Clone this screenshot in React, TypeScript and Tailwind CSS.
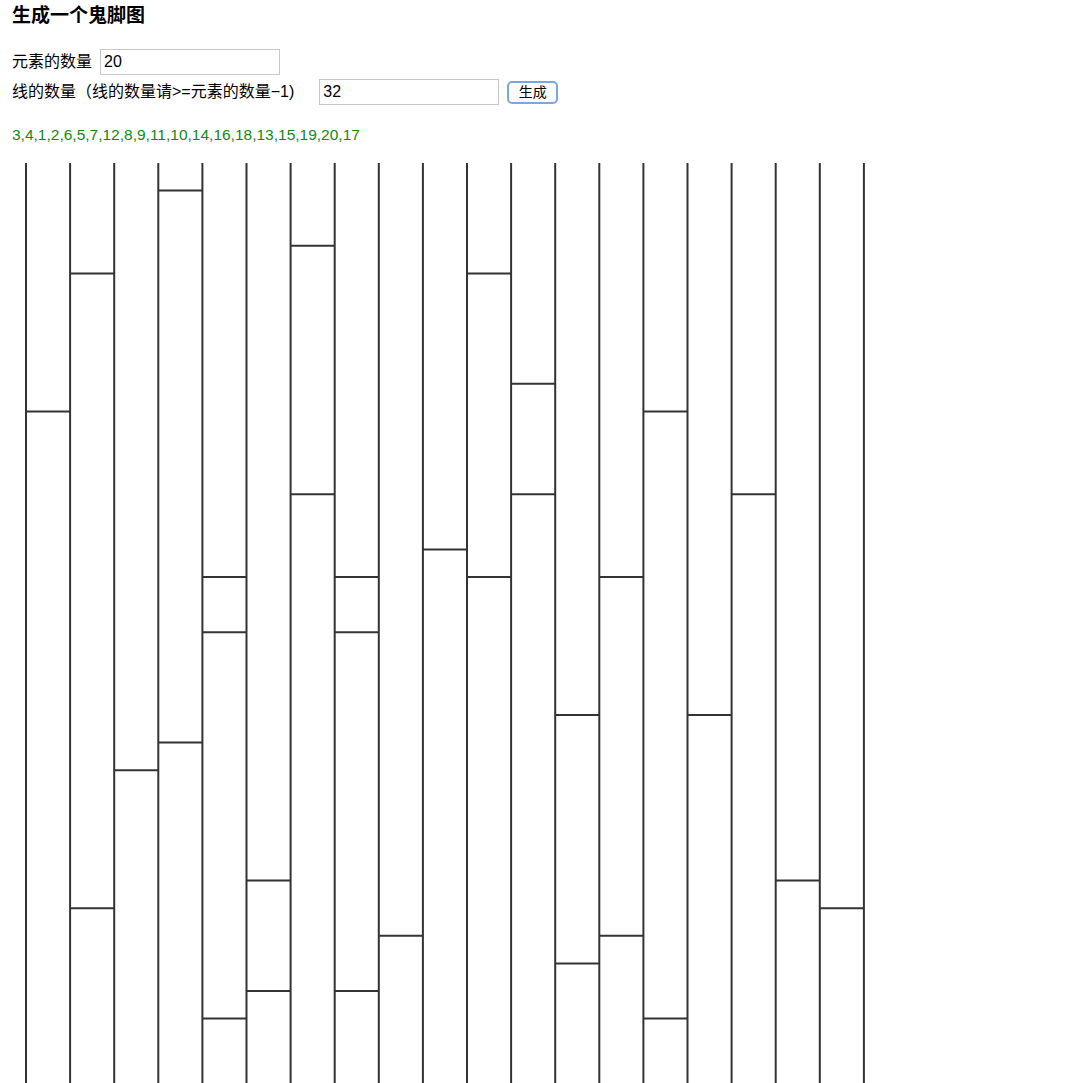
const COLS = 20;
const X0 = 26;
const DX = 44.1;
const STEP = 27.6;

// [column index, step index] of every rung
const rungs: [number, number][] = [
  [0, 9],
  [1, 4], [1, 27],
  [2, 22],
  [3, 1], [3, 21],
  [4, 15], [4, 17], [4, 31],
  [5, 26], [5, 30],
  [6, 3], [6, 12],
  [7, 15], [7, 17], [7, 30],
  [8, 28],
  [9, 14],
  [10, 4], [10, 15],
  [11, 8], [11, 12],
  [12, 20], [12, 29],
  [13, 15], [13, 28],
  [14, 9], [14, 31],
  [15, 20],
  [16, 12],
  [17, 26],
  [18, 27],
];

function Ladder() {
  const h = 960;
  return (
    <svg width={900} height={h} className="block">
      {Array.from({ length: COLS }, (_, i) => (
        <line
          key={"v" + i}
          x1={X0 + DX * i}
          x2={X0 + DX * i}
          y1={0}
          y2={h}
          stroke="#333"
          strokeWidth={2}
        />
      ))}
      {rungs.map(([c, k], i) => (
        <line
          key={"h" + i}
          x1={X0 + DX * c}
          x2={X0 + DX * (c + 1)}
          y1={STEP * k}
          y2={STEP * k}
          stroke="#333"
          strokeWidth={2}
        />
      ))}
    </svg>
  );
}

export default function App() {
  return (
    <div
      className="bg-white text-black min-h-[1083px] overflow-hidden"
      style={{ fontFamily: '"Liberation Sans", "Noto Sans CJK SC", sans-serif' }}
    >
      <div className="pl-[12px]">
        <h3 className="pt-[5px] text-[19px] leading-[22px] font-bold">生成一个鬼脚图</h3>
        <div className="mt-[22px] flex items-center h-[26px] text-[16px]">
          <span>元素的数量</span>
          <input
            className="ml-[8px] w-[180px] h-[26px] border border-[#c8c8c8] px-[3px] text-[16px] outline-none"
            defaultValue="20"
          />
        </div>
        <div className="mt-[4px] flex items-center h-[26px] text-[16px]">
          <span>线的数量（线的数量请&gt;=元素的数量−1)</span>
          <input
            className="ml-[25px] w-[180px] h-[26px] border border-[#c8c8c8] px-[3px] text-[16px] outline-none"
            defaultValue="32"
          />
          <button className="ml-[8px] w-[51px] h-[23px] rounded-[5px] border-2 border-[#7aa7e0] bg-[#fbfbfb] text-[14px] leading-none">
            生成
          </button>
        </div>
        <div className="mt-[20px] text-[15.5px] leading-[20px] text-[#108a10]">
          3,4,1,2,6,5,7,12,8,9,11,10,14,16,18,13,15,19,20,17
        </div>
      </div>
      <div className="mt-[18px]">
        <Ladder />
      </div>
    </div>
  );
}
